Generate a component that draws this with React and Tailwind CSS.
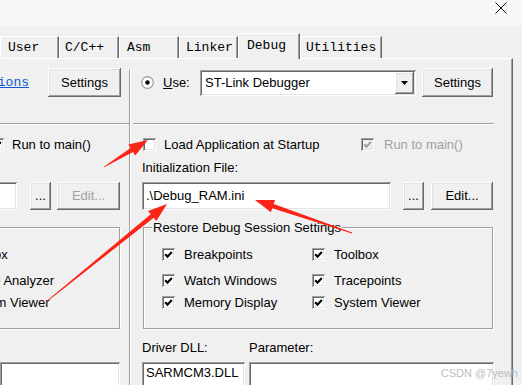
import React from 'react';

const sunken = 'bg-white shadow-[inset_1px_1px_0_#a0a0a0,inset_-1px_-1px_0_#ffffff,inset_2px_2px_0_#696969,inset_-2px_-2px_0_#e3e3e3]';
const raised = 'bg-[#f0f0f0] shadow-[inset_-1px_-1px_0_#696969,inset_1px_1px_0_#ffffff,inset_-2px_-2px_0_#a0a0a0,inset_2px_2px_0_#e3e3e3]';
const mono = "font-['Liberation_Mono',monospace]";

function Check({ checked = true, disabled = false, className = '' }) {
  return (
    <span className={`w-[13px] h-[13px] shrink-0 flex items-center justify-center shadow-[inset_1px_1px_0_#a0a0a0,inset_-1px_-1px_0_#ffffff,inset_2px_2px_0_#696969,inset_-2px_-2px_0_#e3e3e3] ${disabled ? 'bg-[#f0f0f0]' : 'bg-white'} ${className}`}>
      {checked && (
        <svg width="9" height="9" viewBox="0 0 9 9">
          <path d="M1.2 4.2 L3.5 6.6 L7.8 2" stroke={disabled ? '#a0a0a0' : '#000'} strokeWidth="2.1" fill="none" />
        </svg>
      )}
    </span>
  );
}

function Btn({ className = '', disabled = false, children }) {
  return (
    <div className={`shrink-0 flex items-center justify-center ${raised} ${disabled ? 'text-[#a0a0a0]' : 'text-black'} ${className}`}>
      {children}
    </div>
  );
}

function Row({ className = '', children }) {
  return <div className={`h-[15px] leading-[15px] flex items-center whitespace-nowrap ${className}`}>{children}</div>;
}

// tapered screenshot-tool arrow, tail -> tip
function arrowPts(x1, y1, x2, y2, sw = 4.5, hw = 13, hl = 19) {
  const dx = x2 - x1, dy = y2 - y1, L = Math.hypot(dx, dy);
  const ux = dx / L, uy = dy / L, nx = -uy, ny = ux;
  const bx = x2 - ux * hl, by = y2 - uy * hl;
  const p = [
    [x1 + nx * 0.4, y1 + ny * 0.4],
    [bx + (nx * sw) / 2, by + (ny * sw) / 2],
    [bx + (nx * hw) / 2, by + (ny * hw) / 2],
    [x2, y2],
    [bx - (nx * hw) / 2, by - (ny * hw) / 2],
    [bx - (nx * sw) / 2, by - (ny * sw) / 2],
    [x1 - nx * 0.4, y1 - ny * 0.4],
  ];
  return p.map(q => q.map(v => v.toFixed(1)).join(',')).join(' ');
}

const tabs = [
  { label: 'User', w: 'w-[59px]', pl: 'pl-[7px]' },
  { label: 'C/C++', w: 'w-[60px]', pl: 'pl-[5px]' },
  { label: 'Asm', w: 'w-[60px]', pl: 'pl-[7px]' },
  { label: 'Linker', w: 'w-[59px]', pl: 'pl-[6px]' },
  { label: 'Debug', w: 'w-[62px]', pl: 'pl-[8px]', active: true },
  { label: 'Utilities', w: 'w-[82px]', pl: 'pl-[5px]' },
];

export default function App() {
  return (
    <div className="relative w-[522px] h-[385px] overflow-hidden bg-[#f0f0f0] text-black text-[13px] font-['Liberation_Sans',Arial,sans-serif]">
      {/* title strip */}
      <div className="h-[26px] bg-[#f7f7f9] flex justify-end items-start pt-[2px] pr-[15px]">
        <svg width="12" height="12" viewBox="0 0 12 12">
          <path d="M0.5 0.5 L11.5 11.5 M11.5 0.5 L0.5 11.5" stroke="#111" strokeWidth="1" />
        </svg>
      </div>

      {/* tabs */}
      <div className={`h-[32px] flex items-end ${mono}`}>
        {tabs.map(t =>
          t.active ? (
            <div key={t.label} className={`relative z-10 h-[26px] -mb-[1px] ${t.w} ${t.pl} pt-[4px] leading-[15px] bg-[#f0f0f0] border-l border-t border-white border-r border-r-[#696969] shadow-[inset_-1px_0_0_#a0a0a0]`}>
              {t.label}
            </div>
          ) : (
            <div key={t.label} className={`h-[22px] ${t.w} ${t.pl} flex items-center leading-[15px] border-l border-t border-white border-r border-r-[#696969] shadow-[inset_-1px_0_0_#a0a0a0]`}>
              {t.label}
            </div>
          )
        )}
      </div>

      {/* panel */}
      <div className="w-[513px] h-[327px] overflow-hidden flex border-t border-white border-r border-r-[#696969] shadow-[inset_-1px_0_0_#a0a0a0]">
        {/* left (simulator) column, cut off */}
        <div className="w-[129px] shrink-0 overflow-hidden flex flex-col *:shrink-0">
          <div className="mt-[9px] h-[29px] flex items-center">
            <div className="w-[29px] shrink-0 flex justify-end">
              <span className={`whitespace-nowrap underline text-[#0a5ad0] ${mono}`}>with restrictions</span>
            </div>
            <Btn className="ml-[19px] w-[73px] h-[29px]">Settings</Btn>
          </div>
          <div className="mt-[26px] w-[129px] h-[2px] border-t border-t-[#a0a0a0] bg-white" />
          <Row className="mt-[12px]">
            <Check className="-ml-[9px]" />
            <span className="ml-[8px]">Run to main()</span>
          </Row>
          <div className="mt-[30px] h-[28px] flex">
            <div className={`-ml-[100px] w-[117px] h-[28px] shrink-0 ${sunken}`} />
            <Btn className="ml-[13px] w-[21px] h-[28px]">...</Btn>
            <Btn className="ml-[6px] w-[63px] h-[28px]" disabled>Edit...</Btn>
          </div>
          <div className="mt-[17px] -ml-[200px] w-[320px] h-[102px] self-start flex flex-col border border-[#a0a0a0] shadow-[1px_1px_0_#fff,inset_1px_1px_0_#fff]">
            <Row className="mt-[19px]"><span className="ml-[162px]">Toolbox</span></Row>
            <Row className="mt-[11px]">
              <div className="w-[253px] flex justify-end"><span className="whitespace-nowrap">Watch Windows &amp; Performance Analyzer</span></div>
            </Row>
            <Row className="mt-[7px]"><span className="ml-[162px]">System Viewer</span></Row>
          </div>
          <div className={`mt-[33px] w-[120px] h-[28px] ${sunken}`} />
        </div>

        {/* divider */}
        <div className="w-[2px] shrink-0 mt-[11px] border-l border-l-[#a0a0a0] bg-white" />

        {/* right (ST-Link) column */}
        <div className="flex-1 flex flex-col pl-[11px] *:shrink-0">
          <div className="mt-[9px] h-[29px] flex items-center">
            <svg width="13" height="13" viewBox="0 0 13 13" className="-ml-[1px] shrink-0">
              <circle cx="6.5" cy="6.5" r="5.8" fill="#fff" stroke="#9a9a9a" strokeWidth="1.2" />
              <circle cx="6.5" cy="6.5" r="2.2" fill="#000" />
            </svg>
            <span className="ml-[9px] w-[37px] shrink-0"><u>U</u>se:</span>
            <div className={`w-[216px] h-[26px] shrink-0 flex items-center pl-[5px] ${sunken}`}>
              <span className="flex-1">ST-Link Debugger</span>
              <div className={`w-[19px] h-[22px] mr-[2px] flex items-center justify-center ${raised}`}>
                <svg width="7" height="4" viewBox="0 0 7 4"><path d="M0 0 H7 L3.5 4 Z" fill="#000" /></svg>
              </div>
            </div>
            <Btn className="ml-[6px] w-[71px] h-[29px]">Settings</Btn>
          </div>

          <div className="mt-[26px] -ml-[9px] w-[361px] h-[2px] border-t border-t-[#a0a0a0] bg-white" />

          <Row className="mt-[12px]">
            <Check className="ml-[1px]" checked={false} />
            <span className="ml-[8px] w-[197px] shrink-0">Load Application at Startup</span>
            <Check disabled />
            <span className="ml-[10px] text-[#a0a0a0]">Run to main()</span>
          </Row>

          <Row className="mt-[8px]">Initialization File:</Row>

          <div className="mt-[7px] h-[28px] flex">
            <div className={`w-[249px] h-[28px] shrink-0 flex items-center pl-[4px] ${sunken}`}>.\Debug_RAM.ini</div>
            <Btn className="ml-[12px] w-[21px] h-[28px]">...</Btn>
            <Btn className="ml-[7px] w-[62px] h-[28px]">Edit...</Btn>
          </div>

          <div className="mt-[17px] ml-[1px] w-[350px] h-[102px] flex flex-col border border-[#a0a0a0] shadow-[1px_1px_0_#fff,inset_1px_1px_0_#fff]">
            <span className="-mt-[8px] ml-[8px] self-start px-[1px] bg-[#f0f0f0] leading-[15px] whitespace-nowrap">Restore Debug Session Settings</span>
            <Row className="mt-[12px] pl-[18px]">
              <div className="w-[150px] flex items-center"><Check /><span className="ml-[9px]">Breakpoints</span></div>
              <Check /><span className="ml-[9px]">Toolbox</span>
            </Row>
            <Row className="mt-[11px] pl-[18px]">
              <div className="w-[150px] flex items-center"><Check /><span className="ml-[9px]">Watch Windows</span></div>
              <Check /><span className="ml-[9px]">Tracepoints</span>
            </Row>
            <Row className="mt-[7px] pl-[18px]">
              <div className="w-[150px] flex items-center"><Check /><span className="ml-[9px]">Memory Display</span></div>
              <Check /><span className="ml-[9px]">System Viewer</span>
            </Row>
          </div>

          <Row className="mt-[11px]">
            <span className="w-[107px] shrink-0">Driver DLL:</span>
            <span>Parameter:</span>
          </Row>
          <div className="mt-[7px] h-[28px] flex">
            <div className={`w-[103px] h-[28px] shrink-0 pl-[4px] pt-[3px] leading-[15px] ${sunken}`}>SARMCM3.DLL</div>
            <div className={`ml-[4px] w-[245px] h-[28px] shrink-0 ${sunken}`} />
          </div>
        </div>
      </div>

      {/* annotation arrows */}
      <svg className="absolute inset-0 pointer-events-none" width="522" height="385">
        <polygon points={arrowPts(104, 167, 148, 140)} fill="#fb2416" />
        <polygon points={arrowPts(46, 302, 167, 204)} fill="#fb2416" />
        <polygon points={arrowPts(352, 233, 255, 200)} fill="#fb2416" />
      </svg>

      <div className="absolute right-[4px] bottom-[6px] text-[11px] leading-[12px] text-[#bdbdbd] font-['Liberation_Sans',Arial,sans-serif]">
        CSDN @7yewh
      </div>
    </div>
  );
}
